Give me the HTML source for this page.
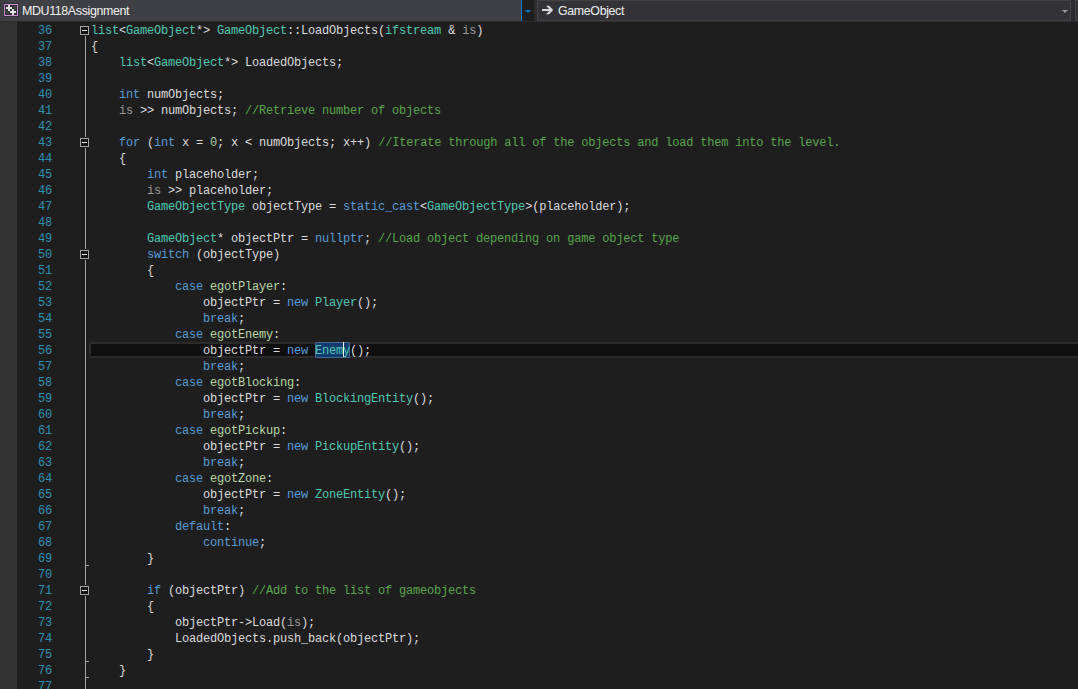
<!DOCTYPE html>
<html><head><meta charset="utf-8"><style>
*{margin:0;padding:0;box-sizing:border-box}
html,body{width:1078px;height:689px;overflow:hidden;background:#1e1e1e}
body{position:relative;font-family:"Liberation Mono",monospace}
.a{position:absolute}
#nav{left:0;top:0;width:1078px;height:22px;background:#2d2d30}
.ln{position:absolute;left:17px;width:35px;text-align:right;color:#2b91af;font-size:12px;letter-spacing:-0.2px;line-height:16px;height:16px;white-space:pre}
.cl{position:absolute;left:91px;color:#dcdcdc;font-size:12px;letter-spacing:-0.2px;line-height:16px;height:16px;white-space:pre}
.k{color:#569cd6}.t{color:#4ec9b0}.c{color:#57a64a}.n{color:#b5cea8}.e{color:#b8d7a3}.p{color:#9b9b9b}
.ui{font-family:"Liberation Sans",sans-serif;color:#f1f1f1;font-size:12.4px;letter-spacing:-0.35px;white-space:pre}
</style></head><body>

<div id="nav" class="a"></div>
<div class="a" style="left:0;top:0;width:1px;height:21px;background:#3a3a3f"></div>
<div class="a" style="left:1px;top:0;width:520px;height:21px;background:#3f3f46"></div>
<div class="a" style="left:521px;top:0;width:1px;height:21px;background:#007acc"></div>
<div class="a" style="left:522px;top:0;width:12px;height:21px;background:#1f1f20"></div>
<div class="a" style="left:525px;top:10px;width:0;height:0;border-left:3px solid transparent;border-right:3px solid transparent;border-top:3px solid #007acc"></div>
<div class="a" style="left:537px;top:0;width:534px;height:21px;background:#333337;border:1px solid #434346"></div>
<div class="a" style="left:1062px;top:10px;width:0;height:0;border-left:3px solid transparent;border-right:3px solid transparent;border-top:3px solid #999999"></div>
<div class="a" style="left:1075px;top:0;width:10px;height:21px;background:#333337;border:1px solid #434346"></div>
<svg class="a" style="left:0;top:0" width="20" height="20" shape-rendering="crispEdges">
<rect x="3" y="3" width="16" height="14" fill="#313237"/>
<rect x="5" y="5" width="12" height="10" fill="#2e2f33"/>
<rect x="6" y="6" width="10" height="8" fill="#404047"/>
<path d="M8 5h2v2h2v2h-2v2h-2v-2h-2v-2h2z M12 9h2v2h2v2h-2v2h-2v-2h-2v-2h2z" fill="#e2e2e2" stroke="#303136" stroke-width="2" stroke-linejoin="miter"/>
<rect x="4.5" y="4.5" width="13" height="11" fill="none" stroke="#cf8cd0" stroke-width="1"/>
<path d="M8 5h2v2h2v2h-2v2h-2v-2h-2v-2h2z M12 9h2v2h2v2h-2v2h-2v-2h-2v-2h2z" fill="#e2e2e2"/>
</svg>
<div class="a ui" style="left:22px;top:4px">MDU118Assignment</div>
<svg class="a" style="left:538px;top:2px" width="20" height="16"><polygon points="4,7 11.2,7 8,3.8 11.2,3.8 15.2,8 11.2,12.2 8,12.2 11.2,9 4,9" fill="#d6d6d6"/></svg>
<div class="a ui" style="left:558px;top:4px">GameObject</div>
<div class="a" style="left:0;top:22px;width:16px;height:667px;background:#333333"></div>
<div class="a" style="left:16px;top:22px;width:1px;height:667px;background:#373737"></div>
<div class="a" style="left:89px;top:342px;width:1000px;height:16px;background:#0f0f0f;border:2px solid #2b2b2b;border-right:none"></div>
<svg class="a" style="left:70px;top:22px" width="20" height="667" shape-rendering="crispEdges">
<rect x="15" y="14" width="1" height="101" fill="#a5a5a5"/>
<rect x="15" y="126" width="1" height="101" fill="#a5a5a5"/>
<rect x="15" y="238" width="1" height="325" fill="#a5a5a5"/>
<rect x="15" y="574" width="1" height="126" fill="#a5a5a5"/>
<rect x="10.5" y="4.5" width="8" height="8" fill="#141414" stroke="#a5a5a5" stroke-width="1"/>
<rect x="12" y="8" width="5" height="1" fill="#e8e8e8"/>
<rect x="10.5" y="116.5" width="8" height="8" fill="#141414" stroke="#a5a5a5" stroke-width="1"/>
<rect x="12" y="120" width="5" height="1" fill="#e8e8e8"/>
<rect x="10.5" y="228.5" width="8" height="8" fill="#141414" stroke="#a5a5a5" stroke-width="1"/>
<rect x="12" y="232" width="5" height="1" fill="#e8e8e8"/>
<rect x="10.5" y="564.5" width="8" height="8" fill="#141414" stroke="#a5a5a5" stroke-width="1"/>
<rect x="12" y="568" width="5" height="1" fill="#e8e8e8"/>
<rect x="16" y="543" width="3" height="1" fill="#a5a5a5"/>
<rect x="16" y="639" width="3" height="1" fill="#a5a5a5"/>
<rect x="16" y="655" width="3" height="1" fill="#a5a5a5"/>
</svg>
<div class="a" style="left:315px;top:342px;width:35px;height:16px;background:#0f3b6e;border:1px solid #4a6a94;border-radius:1px"></div>
<div class="ln" style="top:23px">36</div>
<div class="cl" style="top:23px"><span class="t">list</span>&lt;<span class="t">GameObject</span>*&gt; <span class="t">GameObject</span>::LoadObjects(<span class="t">ifstream</span> &amp; <span class="p">is</span>)</div>
<div class="ln" style="top:39px">37</div>
<div class="cl" style="top:39px">{</div>
<div class="ln" style="top:55px">38</div>
<div class="cl" style="top:55px">    <span class="t">list</span>&lt;<span class="t">GameObject</span>*&gt; LoadedObjects;</div>
<div class="ln" style="top:71px">39</div>
<div class="ln" style="top:87px">40</div>
<div class="cl" style="top:87px">    <span class="k">int</span> numObjects;</div>
<div class="ln" style="top:103px">41</div>
<div class="cl" style="top:103px">    <span class="p">is</span> &gt;&gt; numObjects; <span class="c">//Retrieve number of objects</span></div>
<div class="ln" style="top:119px">42</div>
<div class="ln" style="top:135px">43</div>
<div class="cl" style="top:135px">    <span class="k">for</span> (<span class="k">int</span> x = <span class="n">0</span>; x &lt; numObjects; x++) <span class="c">//Iterate through all of the objects and load them into the level.</span></div>
<div class="ln" style="top:151px">44</div>
<div class="cl" style="top:151px">    {</div>
<div class="ln" style="top:167px">45</div>
<div class="cl" style="top:167px">        <span class="k">int</span> placeholder;</div>
<div class="ln" style="top:183px">46</div>
<div class="cl" style="top:183px">        <span class="p">is</span> &gt;&gt; placeholder;</div>
<div class="ln" style="top:199px">47</div>
<div class="cl" style="top:199px">        <span class="t">GameObjectType</span> objectType = <span class="k">static_cast</span>&lt;<span class="t">GameObjectType</span>&gt;(placeholder);</div>
<div class="ln" style="top:215px">48</div>
<div class="ln" style="top:231px">49</div>
<div class="cl" style="top:231px">        <span class="t">GameObject</span>* objectPtr = <span class="k">nullptr</span>; <span class="c">//Load object depending on game object type</span></div>
<div class="ln" style="top:247px">50</div>
<div class="cl" style="top:247px">        <span class="k">switch</span> (objectType)</div>
<div class="ln" style="top:263px">51</div>
<div class="cl" style="top:263px">        {</div>
<div class="ln" style="top:279px">52</div>
<div class="cl" style="top:279px">            <span class="k">case</span> <span class="e">egotPlayer</span>:</div>
<div class="ln" style="top:295px">53</div>
<div class="cl" style="top:295px">                objectPtr = <span class="k">new</span> <span class="t">Player</span>();</div>
<div class="ln" style="top:311px">54</div>
<div class="cl" style="top:311px">                <span class="k">break</span>;</div>
<div class="ln" style="top:327px">55</div>
<div class="cl" style="top:327px">            <span class="k">case</span> <span class="e">egotEnemy</span>:</div>
<div class="ln" style="top:343px">56</div>
<div class="cl" style="top:343px">                objectPtr = <span class="k">new</span> <span class="t">Enemy</span>();</div>
<div class="ln" style="top:359px">57</div>
<div class="cl" style="top:359px">                <span class="k">break</span>;</div>
<div class="ln" style="top:375px">58</div>
<div class="cl" style="top:375px">            <span class="k">case</span> <span class="e">egotBlocking</span>:</div>
<div class="ln" style="top:391px">59</div>
<div class="cl" style="top:391px">                objectPtr = <span class="k">new</span> <span class="t">BlockingEntity</span>();</div>
<div class="ln" style="top:407px">60</div>
<div class="cl" style="top:407px">                <span class="k">break</span>;</div>
<div class="ln" style="top:423px">61</div>
<div class="cl" style="top:423px">            <span class="k">case</span> <span class="e">egotPickup</span>:</div>
<div class="ln" style="top:439px">62</div>
<div class="cl" style="top:439px">                objectPtr = <span class="k">new</span> <span class="t">PickupEntity</span>();</div>
<div class="ln" style="top:455px">63</div>
<div class="cl" style="top:455px">                <span class="k">break</span>;</div>
<div class="ln" style="top:471px">64</div>
<div class="cl" style="top:471px">            <span class="k">case</span> <span class="e">egotZone</span>:</div>
<div class="ln" style="top:487px">65</div>
<div class="cl" style="top:487px">                objectPtr = <span class="k">new</span> <span class="t">ZoneEntity</span>();</div>
<div class="ln" style="top:503px">66</div>
<div class="cl" style="top:503px">                <span class="k">break</span>;</div>
<div class="ln" style="top:519px">67</div>
<div class="cl" style="top:519px">            <span class="k">default</span>:</div>
<div class="ln" style="top:535px">68</div>
<div class="cl" style="top:535px">                <span class="k">continue</span>;</div>
<div class="ln" style="top:551px">69</div>
<div class="cl" style="top:551px">        }</div>
<div class="ln" style="top:567px">70</div>
<div class="ln" style="top:583px">71</div>
<div class="cl" style="top:583px">        <span class="k">if</span> (objectPtr) <span class="c">//Add to the list of gameobjects</span></div>
<div class="ln" style="top:599px">72</div>
<div class="cl" style="top:599px">        {</div>
<div class="ln" style="top:615px">73</div>
<div class="cl" style="top:615px">            objectPtr-&gt;Load(<span class="p">is</span>);</div>
<div class="ln" style="top:631px">74</div>
<div class="cl" style="top:631px">            LoadedObjects.push_back(objectPtr);</div>
<div class="ln" style="top:647px">75</div>
<div class="cl" style="top:647px">        }</div>
<div class="ln" style="top:663px">76</div>
<div class="cl" style="top:663px">    }</div>
<div class="ln" style="top:679px">77</div>
<div class="a" style="left:343px;top:342px;width:1px;height:15px;background:#f0f0f0"></div>
</body></html>
